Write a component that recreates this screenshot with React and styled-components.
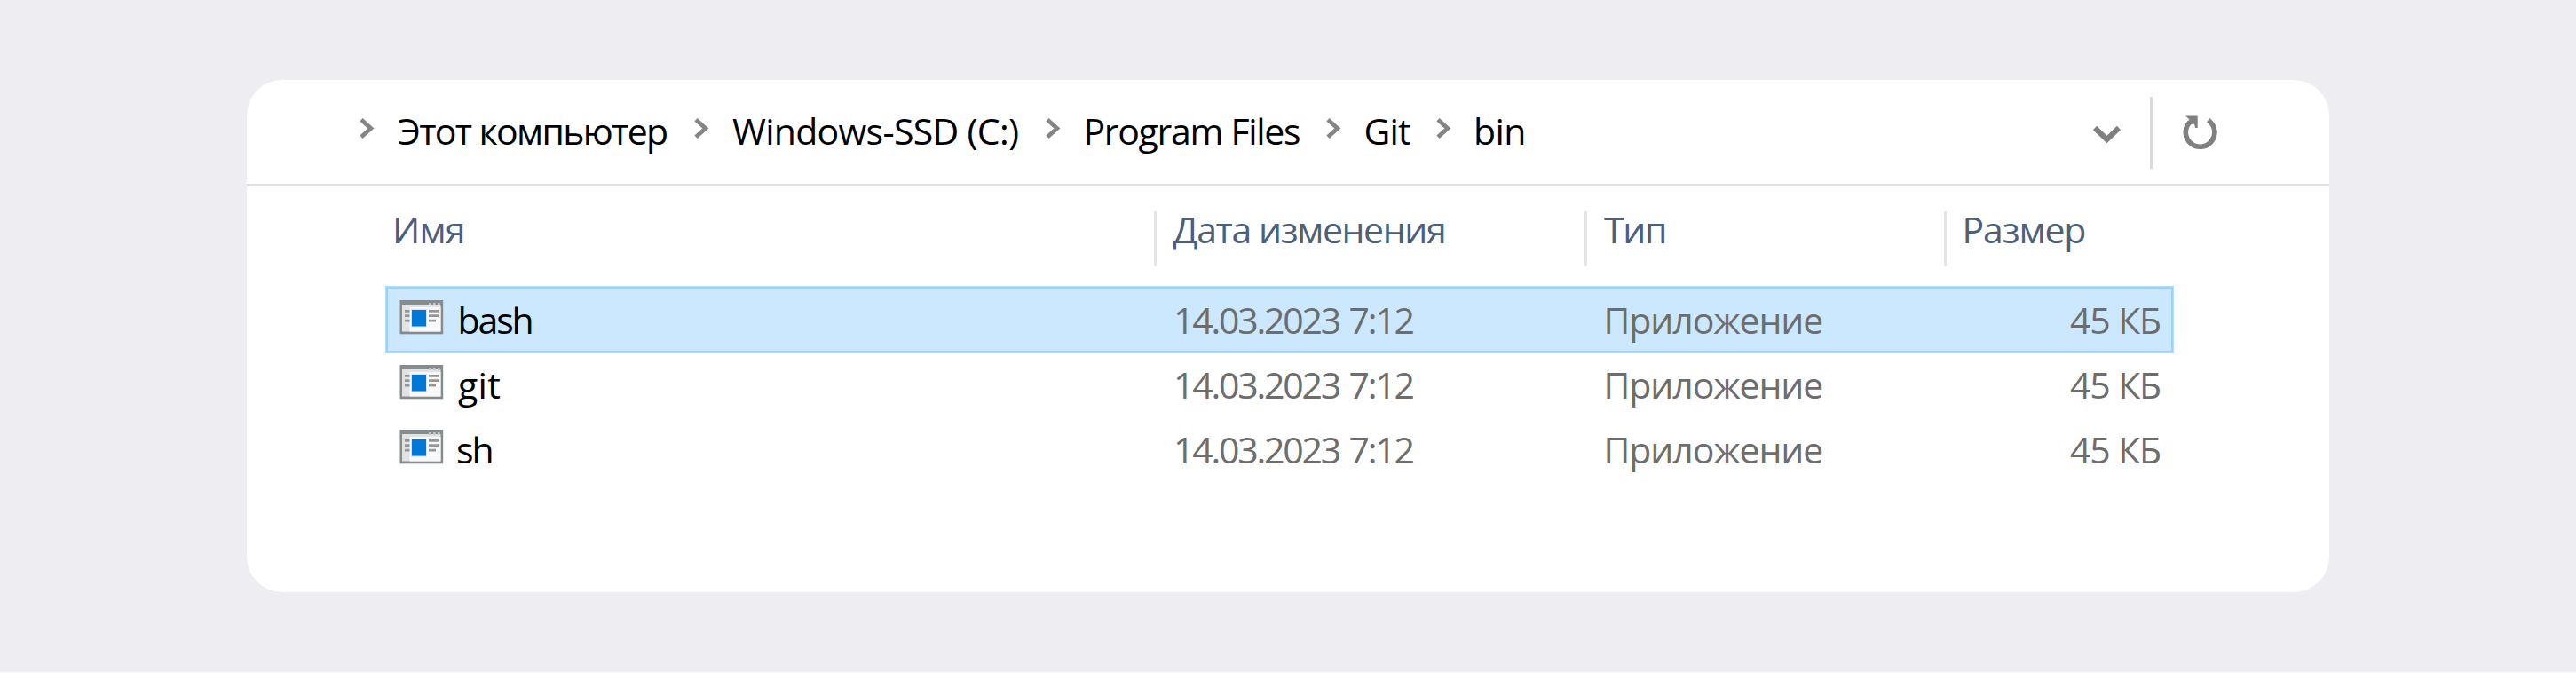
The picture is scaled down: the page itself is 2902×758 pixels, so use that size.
import React from "react";
import styled, { createGlobalStyle } from "styled-components";

const GlobalStyle = createGlobalStyle`
  body {
    margin: 0;
    background: #ffffff;
  }
`;

const Page = styled.main`
  box-sizing: border-box;
  width: 2902px;
  height: 757px;
  padding: 90px 278px;
  background: #eeeef2;
  font-family: "Open Sans", "Noto Sans", sans-serif;
  font-size: 41px;
  line-height: 56px;
  white-space: pre;
`;

const Window = styled.section`
  height: 577px;
  border-radius: 40px;
  background: #ffffff;
  overflow: hidden;
`;

const AddressBar = styled.header`
  box-sizing: border-box;
  display: flex;
  height: 120px;
  padding: 0 126px 0 127px;
  border-bottom: 3px solid #dfdfdf;
`;

const Breadcrumbs = styled.nav`
  display: flex;
  flex: 1;
  padding-top: 29px;
`;

const Crumb = styled.div`
  display: flex;
  width: ${(p) => p.$width}px;
  color: #000000;
`;

const CrumbLabel = styled.span`
  padding-left: ${(p) => p.$indent}px;
  letter-spacing: ${(p) => p.$tracking}px;
`;

const CrumbChevron = styled.svg`
  flex: none;
  width: 17px;
  height: 26px;
  margin-top: 13px;
`;

const Actions = styled.div`
  display: flex;
  padding-top: 19px;
`;

const DropdownIcon = styled.svg`
  width: 34px;
  height: 22px;
  margin: 31px 31px 0 0;
`;

const ActionDivider = styled.div`
  width: 3px;
  height: 81px;
  background: #d9d9d9;
`;

const RefreshIcon = styled.svg`
  width: 42px;
  height: 42px;
  margin: 20px 0 0 31px;
`;

const FileList = styled.div`
  width: 2015px;
  padding: 28px 0 0 156px;
`;

const Columns = styled.div`
  display: grid;
  grid-template-columns: 866px 485px 405px 259px;
`;

const ColumnHeaders = styled(Columns)`
  height: 62px;
  margin-bottom: 22px;
  color: #4c607a;
`;

const ColumnHeader = styled.div`
  box-sizing: border-box;
  height: 62px;
  padding-left: ${(p) => p.$indent}px;
  border-left: ${(p) => (p.$first ? "none" : "3px solid #e5e5e5")};
  line-height: 40px;
  letter-spacing: ${(p) => p.$tracking}px;
`;

const FileRow = styled(Columns)`
  height: 76px;
  margin-bottom: -3px;
  line-height: 76px;
  color: #6d6d6d;
  background: ${(p) => (p.$selected ? "#cce8ff" : "transparent")};
  box-shadow: ${(p) =>
    p.$selected ? "inset 0 0 0 1px #b3ddff, inset 0 0 0 3px #99d1ff" : "none"};
`;

const NameCell = styled.div`
  display: flex;
  padding-left: 16px;
  color: #000000;
`;

const AppIcon = styled.svg`
  flex: none;
  width: 50px;
  height: 39px;
  margin-top: 16px;
`;

const FileName = styled.span`
  padding-left: ${(p) => p.$indent}px;
  letter-spacing: ${(p) => p.$tracking}px;
`;

const DateCell = styled.div`
  padding-left: 22px;
  letter-spacing: -2.2px;
  word-spacing: 2px;
`;

const TypeCell = styled.div`
  padding-left: 21.5px;
  letter-spacing: -1.05px;
`;

const SizeCell = styled.div`
  padding-right: 15px;
  text-align: right;
  letter-spacing: -1.14px;
`;

const crumbs = [
  { label: "Этот компьютер", width: 377, indent: 26, tracking: -1.66 },
  { label: "Windows-SSD (C:)", width: 396, indent: 26, tracking: -0.71 },
  { label: "Program Files", width: 316, indent: 25.5, tracking: -1.32 },
  { label: "Git", width: 123.5, indent: 25.5, tracking: -0.83 },
  { label: "bin", width: 110, indent: 25.5, tracking: -0.6 },
];

const headers = [
  { label: "Имя", indent: 8, tracking: -0.7 },
  { label: "Дата изменения", indent: 18.5, tracking: -1.39 },
  { label: "Тип", indent: 19, tracking: -1.3 },
  { label: "Размер", indent: 17.5, tracking: -1.1 },
];

const files = [
  { name: "bash", indent: 15.5, tracking: -2.1, selected: true },
  { name: "git", indent: 16, tracking: 0.3 },
  { name: "sh", indent: 14, tracking: -2 },
];

function Application() {
  return (
    <AppIcon viewBox="0 0 50 39">
      <rect x="0.5" y="0" width="48.7" height="38.3" fill="#868b8e" />
      <rect x="3" y="5" width="43.5" height="30.5" fill="#e3e3e3" />
      <rect x="11.5" y="8" width="35" height="27.5" fill="#f8f8f8" />
      <path d="M33 3h2.7v3H33zM38 3h2.7v3H38zM43 3h2.7v3H43z" fill="#c3c7c9" />
      <rect x="13" y="10" width="18" height="20.5" fill="#d3e6f7" />
      <rect x="14" y="11" width="16" height="18.5" fill="#0078d7" />
      <path
        d="M6 11h5.5v2.7H6zM6 16.3h5.5V19H6zM6 21.7h5.5v2.7H6zM33 11h11v2.7H33zM33 16.3h11V19H33zM33 21.7h8v2.7h-8z"
        fill="#969696"
      />
    </AppIcon>
  );
}

export default function App() {
  return (
    <>
      <GlobalStyle />
      <Page>
        <Window>
          <AddressBar>
            <Breadcrumbs>
              {crumbs.map((c) => (
                <Crumb key={c.label} $width={c.width}>
                  <CrumbChevron viewBox="0 0 17 26">
                    <path d="M2 2.8L12.8 12.5L2 22.2" fill="none" stroke="#858585" strokeWidth="4.8" />
                  </CrumbChevron>
                  <CrumbLabel $indent={c.indent} $tracking={c.tracking}>
                    {c.label}
                  </CrumbLabel>
                </Crumb>
              ))}
            </Breadcrumbs>
            <Actions>
              <DropdownIcon viewBox="0 0 34 22">
                <path d="M3 4L16.5 17L30 4" fill="none" stroke="#808080" strokeWidth="6" />
              </DropdownIcon>
              <ActionDivider />
              <RefreshIcon viewBox="0 0 42 42">
                <path d="M11 8.5A16.3 16.3 0 1 0 31.5 6.3" fill="none" stroke="#808080" strokeWidth="5.6" />
                <path d="M6 1.5H19.7V15H17L16 10.5L12 11L8.5 8L10.5 5.5Z" fill="#808080" />
              </RefreshIcon>
            </Actions>
          </AddressBar>
          <FileList>
            <ColumnHeaders>
              {headers.map((h, i) => (
                <ColumnHeader key={h.label} $first={i === 0} $indent={h.indent} $tracking={h.tracking}>
                  {h.label}
                </ColumnHeader>
              ))}
            </ColumnHeaders>
            {files.map((f) => (
              <FileRow key={f.name} $selected={f.selected}>
                <NameCell>
                  <Application />
                  <FileName $indent={f.indent} $tracking={f.tracking}>
                    {f.name}
                  </FileName>
                </NameCell>
                <DateCell>14.03.2023 7:12</DateCell>
                <TypeCell>Приложение</TypeCell>
                <SizeCell>45 КБ</SizeCell>
              </FileRow>
            ))}
          </FileList>
        </Window>
      </Page>
    </>
  );
}
